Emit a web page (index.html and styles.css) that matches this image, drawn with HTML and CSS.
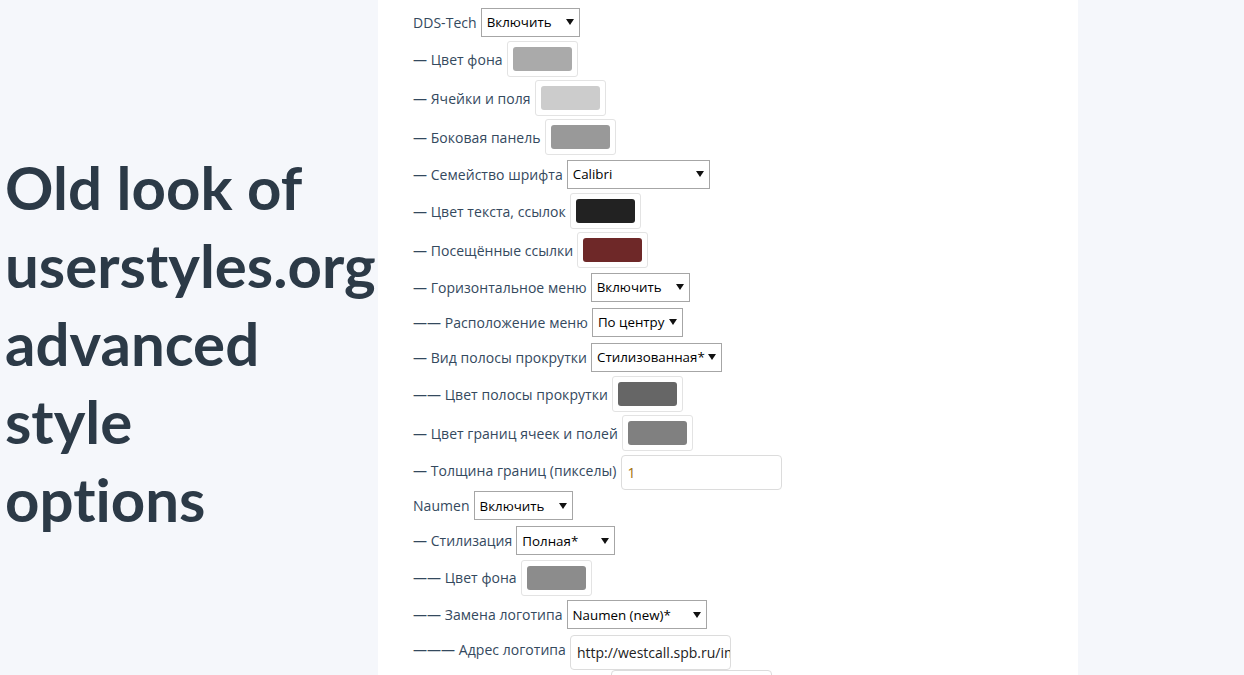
FILE: index.html
```html
<!DOCTYPE html>
<html lang="ru">
<head>
<meta charset="utf-8">
<title>Old look of userstyles.org advanced style options</title>
<link rel="stylesheet" href="styles.css">
</head>
<body>
<div class="page">
  <aside class="intro">
    <h1 class="title">Old look of<br>userstyles.org<br>advanced<br>style<br>options</h1>
  </aside>
  <main class="panel">
    <div class="form">
      <div class="row"><span class="label">DDS-Tech</span><div class="select w99"><span>Включить</span><svg class="caret" width="8" height="6" viewBox="0 0 8 6"><polygon points="0,0 8,0 4,6"/></svg></div></div>
      <div class="row row-color"><span class="label">— Цвет фона</span><div class="swatch"><span class="chip" style="background:#aaaaaa"></span></div></div>
      <div class="row row-color"><span class="label">— Ячейки и поля</span><div class="swatch"><span class="chip" style="background:#cccccc"></span></div></div>
      <div class="row row-color"><span class="label">— Боковая панель</span><div class="swatch"><span class="chip" style="background:#999999"></span></div></div>
      <div class="row"><span class="label">— Семейство шрифта</span><div class="select w143"><span>Calibri</span><svg class="caret" width="8" height="6" viewBox="0 0 8 6"><polygon points="0,0 8,0 4,6"/></svg></div></div>
      <div class="row row-color"><span class="label">— Цвет текста, ссылок</span><div class="swatch"><span class="chip" style="background:#222222"></span></div></div>
      <div class="row row-color"><span class="label">— Посещённые ссылки</span><div class="swatch"><span class="chip" style="background:#6e2828"></span></div></div>
      <div class="row"><span class="label">— Горизонтальное меню</span><div class="select w99"><span>Включить</span><svg class="caret" width="8" height="6" viewBox="0 0 8 6"><polygon points="0,0 8,0 4,6"/></svg></div></div>
      <div class="row"><span class="label">—— Расположение меню</span><div class="select w91"><span>По центру</span><svg class="caret" width="8" height="6" viewBox="0 0 8 6"><polygon points="0,0 8,0 4,6"/></svg></div></div>
      <div class="row"><span class="label">— Вид полосы прокрутки</span><div class="select w131"><span>Стилизованная*</span><svg class="caret" width="8" height="6" viewBox="0 0 8 6"><polygon points="0,0 8,0 4,6"/></svg></div></div>
      <div class="row row-color"><span class="label">—— Цвет полосы прокрутки</span><div class="swatch"><span class="chip" style="background:#666666"></span></div></div>
      <div class="row row-color"><span class="label">— Цвет границ ячеек и полей</span><div class="swatch"><span class="chip" style="background:#808080"></span></div></div>
      <div class="row row-text"><span class="label">— Толщина границ (пикселы)</span><div class="field num">1</div></div>
      <div class="row"><span class="label">Naumen</span><div class="select w99"><span>Включить</span><svg class="caret" width="8" height="6" viewBox="0 0 8 6"><polygon points="0,0 8,0 4,6"/></svg></div></div>
      <div class="row"><span class="label">— Стилизация</span><div class="select w99"><span>Полная*</span><svg class="caret" width="8" height="6" viewBox="0 0 8 6"><polygon points="0,0 8,0 4,6"/></svg></div></div>
      <div class="row row-color"><span class="label">—— Цвет фона</span><div class="swatch"><span class="chip" style="background:#8c8c8c"></span></div></div>
      <div class="row"><span class="label">—— Замена логотипа</span><div class="select w140"><span>Naumen (new)*</span><svg class="caret" width="8" height="6" viewBox="0 0 8 6"><polygon points="0,0 8,0 4,6"/></svg></div></div>
      <div class="row row-text"><span class="label">——— Адрес логотипа</span><div class="field">http://westcall.spb.ru/images/logo.png</div></div>
      <div class="row row-text"><span class="label">——— Ширина логотипа, px</span><div class="field"></div></div>
    </div>
  </main>
  <div class="side"></div>
</div>
</body>
</html>
```

FILE: styles.css
```css
html, body {
  margin: 0;
  padding: 0;
  height: 100%;
  overflow: hidden;
}
body {
  font-family: "Open Sans", "Liberation Sans", sans-serif;
  background: #f5f7fb;
}
.page {
  display: flex;
  height: 675px;
}
.intro {
  width: 378px;
  flex: none;
  background: #f5f7fb;
  display: flex;
  flex-direction: column;
  justify-content: center;
}
.title {
  margin: 0;
  padding-left: 5px;
  padding-top: 10px;
  font-family: Lato, "Open Sans", sans-serif;
  font-weight: 700;
  font-size: 60px;
  line-height: 78px;
  color: #2c3a47;
  font-variant-ligatures: none;
  white-space: nowrap;
}
.panel {
  width: 700px;
  flex: none;
  background: #ffffff;
  overflow: hidden;
}
.side {
  flex: 1;
  background: #f5f7fb;
}
.form {
  padding: 4.5px 0 0 35px;
}
.row {
  display: flex;
  align-items: center;
  gap: 4px;
  height: 35px;
}
.row-color {
  height: 39px;
}
.row-text {
  height: 35.5px;
}
.label {
  font-size: 14px;
  letter-spacing: 0.04px;
  color: #34495e;
  white-space: nowrap;
}
.select {
  box-sizing: border-box;
  height: 29px;
  border: 1px solid #a6a6a6;
  background: #fff;
  display: flex;
  align-items: center;
  justify-content: space-between;
  padding: 0 5px 0 5px;
  font-size: 13.33px;
  color: #000;
  white-space: nowrap;
}
.caret {
  flex: none;
  fill: #111;
}
.w99 { width: 99px; }
.w143 { width: 143px; }
.w91 { width: 91px; }
.w131 { width: 131px; }
.w140 { width: 140px; }
.swatch {
  box-sizing: border-box;
  width: 71px;
  height: 36px;
  border: 1px solid #e3e3e3;
  border-radius: 3px;
  padding: 5px;
  background: #fff;
  display: flex;
}
.chip {
  flex: 1;
  border-radius: 3px;
}
.field {
  box-sizing: border-box;
  width: 161px;
  height: 35px;
  margin-top: 5px;
  border: 1px solid #dcdcdc;
  border-radius: 4px;
  padding: 0 0 0 6px;
  display: flex;
  align-items: center;
  font-size: 14px;
  color: #222;
  white-space: nowrap;
  overflow: hidden;
}
.num {
  color: #a0700a;
}
```
